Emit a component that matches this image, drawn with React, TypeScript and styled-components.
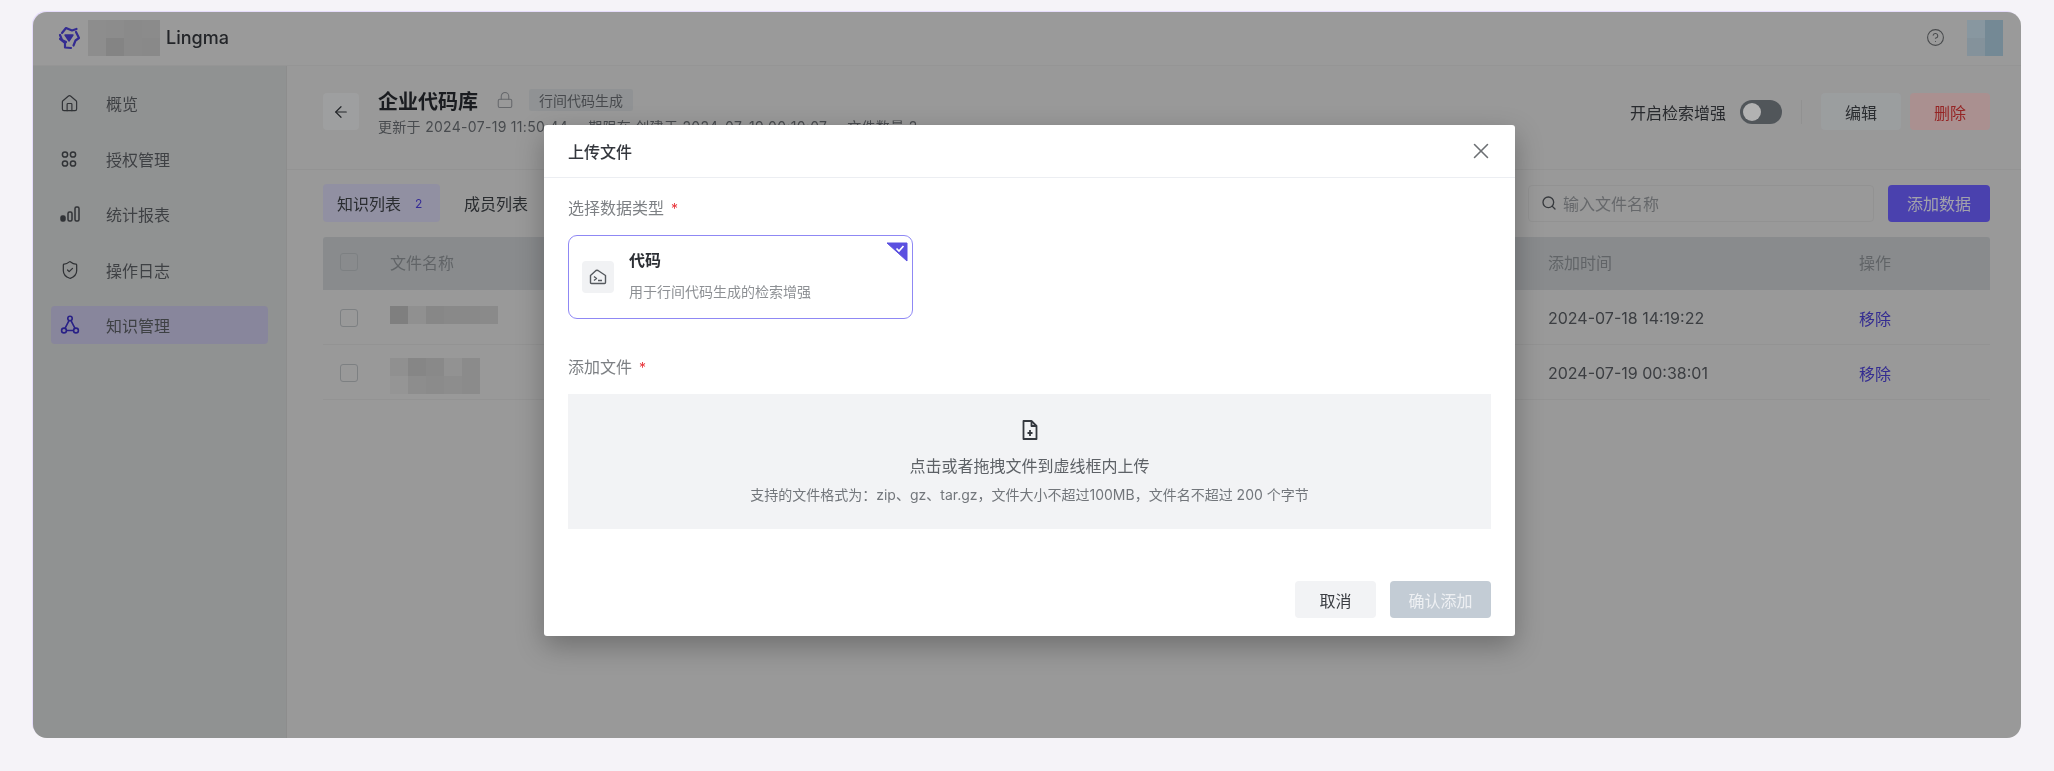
import React from 'react';
import styled, { createGlobalStyle } from 'styled-components';
import { ArrowLeft, CircleHelp, House, Lock, Search, ShieldCheck, X } from 'lucide-react';

const GlobalStyle = createGlobalStyle`
  html, body { margin: 0; padding: 0; background: #f5f3f8; }
  * { box-sizing: border-box; }
  body { font-family: Inter, "Noto Sans CJK SC", sans-serif; color: #2b2f36; }
`;

const Page = styled.div`
  width: 2054px;
  height: 771px;
  padding: 12px 33px 33px;
  overflow: hidden;
`;

const AppFrame = styled.div`
  position: relative;
  height: 726px;
  display: flex;
  flex-direction: column;
  border-radius: 14px;
  overflow: hidden;
  background: #dbdbdb;
  box-shadow: -1px -1px 0 #e6dcfb;
  filter: blur(0.55px);
`;

const TopBar = styled.header`
  height: 54px;
  flex: none;
  display: flex;
  align-items: center;
  padding: 0 18px 2px 24px;
  background: #dddddd;
  border-bottom: 1px solid #d6d6d6;
`;

const BrandName = styled.span`
  font-size: 18px;
  font-weight: 500;
  margin-left: 6px;
  color: #33363b;
`;

const MosaicGrid = styled.div<{ $cols: number; $cell: number }>`
  display: grid;
  grid-template-columns: repeat(${(p) => p.$cols}, ${(p) => p.$cell}px);
  grid-auto-rows: ${(p) => p.$cell}px;
`;

const MosaicCell = styled.div<{ $c: string }>`
  background: ${(p) => p.$c};
`;

const BrandMosaic = styled(MosaicGrid)`
  margin-left: 7px;
`;

const FileMosaic = styled(MosaicGrid)<{ $shift: number }>`
  margin-top: ${(p) => (p.$shift > 0 ? p.$shift : 0)}px;
  margin-bottom: ${(p) => (p.$shift < 0 ? -p.$shift : 0)}px;
`;

const TopRight = styled.div`
  margin-left: auto;
  display: flex;
  align-items: center;
  gap: 22px;
  color: #6a6d70;
`;

const Body = styled.div`
  flex: 1;
  display: flex;
  min-height: 0;
`;

const Sidebar = styled.nav`
  width: 254px;
  flex: none;
  padding: 18px 18px 0;
  display: flex;
  flex-direction: column;
  gap: 17.6px;
  background: #cfd1d1;
  border-right: 1px solid #cbcbcb;
`;

const NavItem = styled.div<{ $active?: boolean }>`
  height: 38px;
  display: flex;
  align-items: center;
  gap: 28px;
  padding-left: 9px;
  border-radius: 4px;
  font-size: 16px;
  color: #5a5d62;
  background: ${(p) => (p.$active ? '#c3c0e0' : 'transparent')};
  svg { flex: none; color: ${(p) => (p.$active ? '#3a2fc0' : '#46494e')}; }
`;

const NavIcon = styled.span`
  width: 18px;
  flex: none;
  display: flex;
`;

const Main = styled.main`
  flex: 1;
  min-width: 0;
  display: flex;
  flex-direction: column;
`;

const DetailHead = styled.section`
  height: 104px;
  flex: none;
  display: flex;
  align-items: flex-start;
  padding: 27px 31px 0 36px;
  border-bottom: 1px solid #d3d3d3;
`;

const BackButton = styled.div`
  width: 36px;
  height: 37px;
  display: flex;
  align-items: center;
  justify-content: center;
  border-radius: 4px;
  background: #e3e4e5;
  color: #33373c;
`;

const TitleBlock = styled.div`
  margin-left: 19px;
  margin-top: -7px;
`;

const TitleRow = styled.div`
  display: flex;
  align-items: center;
  height: 28px;
`;

const Title = styled.h1`
  margin: 0;
  font-size: 20px;
  font-weight: 600;
  color: #26292e;
`;

const LockWrap = styled.span`
  display: flex;
  margin: 0 15px 0 18px;
  color: #92959a;
`;

const ModeTag = styled.span`
  height: 22px;
  padding: 0 10px;
  display: flex;
  align-items: center;
  font-size: 14px;
  border-radius: 2px;
  color: #676b70;
  background: #cfd2d4;
`;

const MetaLine = styled.div`
  display: flex;
  gap: 20px;
  margin-top: 3px;
  font-size: 14px;
  line-height: 20px;
  letter-spacing: 0.3px;
  color: #686c71;
  white-space: nowrap;
`;

const HeadActions = styled.div`
  margin-left: auto;
  display: flex;
  align-items: center;
  height: 37px;
`;

const ToggleLabel = styled.span`
  font-size: 16px;
  color: #3a3d42;
  margin-right: 14px;
`;

const Toggle = styled.span`
  width: 42px;
  height: 24px;
  padding: 3px;
  border-radius: 12px;
  background: #747b82;
  display: flex;
  &::before {
    content: '';
    width: 18px;
    height: 18px;
    border-radius: 50%;
    background: #ffffff;
  }
`;

const VRule = styled.span`
  width: 1px;
  height: 24px;
  margin: 0 19px;
  background: #d0d0d0;
`;

const GhostButton = styled.div<{ $danger?: boolean }>`
  width: 80px;
  height: 37px;
  margin-left: ${(p) => (p.$danger ? '9px' : '0')};
  display: flex;
  align-items: center;
  justify-content: center;
  font-size: 16px;
  border-radius: 4px;
  color: ${(p) => (p.$danger ? '#d63434' : '#3d4146')};
  background: ${(p) => (p.$danger ? '#f4cfcf' : '#dfe2e4')};
`;

const ListArea = styled.section`
  padding: 14px 31px 0 36px;
`;

const TabsRow = styled.div`
  display: flex;
  align-items: center;
  height: 38px;
`;

const Tab = styled.div<{ $active?: boolean }>`
  height: 38px;
  width: ${(p) => (p.$active ? '117px' : 'auto')};
  margin-left: ${(p) => (p.$active ? '0' : '10px')};
  padding-left: 14px;
  display: flex;
  align-items: center;
  gap: 14px;
  font-size: 16px;
  border-radius: 4px;
  color: #3d4146;
  background: ${(p) => (p.$active ? '#d0cee8' : 'transparent')};
`;

const TabCount = styled.span`
  font-size: 12px;
  color: #4d40d8;
`;

const SearchBox = styled.div`
  margin-left: auto;
  width: 346px;
  height: 37px;
  display: flex;
  align-items: center;
  gap: 6px;
  padding-left: 12px;
  font-size: 16px;
  border: 1px solid #d2d2d2;
  border-radius: 4px;
  color: #93969a;
  svg { color: #4f5358; }
`;

const AddButton = styled.div`
  width: 102px;
  height: 37px;
  margin-left: 14px;
  display: flex;
  align-items: center;
  justify-content: center;
  font-size: 16px;
  border-radius: 4px;
  color: #e8e8f5;
  background: #6b5dfa;
`;

const TableRow = styled.div<{ $head?: boolean }>`
  display: grid;
  grid-template-columns: 67px 1158px 311px 131px;
  align-items: center;
  height: ${(p) => (p.$head ? '53px' : '55px')};
  margin-top: ${(p) => (p.$head ? '15px' : '0')};
  padding-bottom: ${(p) => (p.$head ? '3px' : '0')};
  padding-top: ${(p) => (p.$head ? '0' : '1px')};
  font-size: 16px;
  color: ${(p) => (p.$head ? '#8c9094' : '#565a5f')};
  background: ${(p) => (p.$head ? '#c4c8cb' : 'transparent')};
  border-bottom: ${(p) => (p.$head ? 'none' : '1px solid #d3d3d3')};
  border-radius: ${(p) => (p.$head ? '3px 3px 0 0' : '0')};
`;

const CheckBox = styled.span`
  width: 18px;
  height: 18px;
  margin-left: 17px;
  border: 1px solid #b3b8bb;
  border-radius: 3px;
`;

const RemoveLink = styled.span`
  color: #4a3fd0;
`;

const Scrim = styled.div`
  position: absolute;
  inset: 0;
  background: rgba(0, 0, 0, 0.3);
`;

const Modal = styled.div`
  position: absolute;
  left: 511px;
  top: 113px;
  width: 971px;
  height: 511px;
  display: flex;
  flex-direction: column;
  border-radius: 3px;
  background: #ffffff;
  box-shadow: 0 10px 28px rgba(0, 0, 0, 0.28);
`;

const ModalHead = styled.div`
  height: 53px;
  flex: none;
  display: flex;
  align-items: center;
  justify-content: space-between;
  padding: 0 21px 0 24px;
  border-bottom: 1px solid #eceef2;
  color: #6c6f73;
`;

const ModalTitle = styled.h2`
  margin: 0;
  font-size: 16px;
  font-weight: 500;
  color: #34373d;
`;

const ModalBody = styled.div`
  padding: 19px 24px 0;
  display: flex;
  flex-direction: column;
`;

const FieldLabel = styled.div<{ $second?: boolean }>`
  font-size: 16px;
  line-height: 22px;
  margin-top: ${(p) => (p.$second ? '37px' : '0')};
  margin-bottom: 15px;
  color: #7d8084;
  &::after { content: ' *'; color: #e8353b; font-size: 14px; margin-left: 3px; }
`;

const TypeCard = styled.div`
  position: relative;
  width: 345px;
  height: 84px;
  display: flex;
  align-items: center;
  gap: 15px;
  padding-left: 13px;
  border: 1.5px solid #8f88f4;
  border-radius: 9px;
`;

const CornerMark = styled.svg`
  position: absolute;
  top: 6px;
  right: 4px;
`;

const TypeIcon = styled.div`
  width: 32px;
  height: 32px;
  flex: none;
  display: flex;
  align-items: center;
  justify-content: center;
  border-radius: 4px;
  background: #f1f2f4;
  color: #55595e;
`;

const TypeTitle = styled.div`
  font-size: 16px;
  font-weight: 600;
  line-height: 22px;
  margin-top: -4px;
  color: #2c2f34;
`;

const TypeDesc = styled.div`
  font-size: 14px;
  line-height: 20px;
  margin-top: 11px;
  color: #8d9094;
`;

const DropZone = styled.div`
  height: 135px;
  padding-top: 26px;
  display: flex;
  flex-direction: column;
  align-items: center;
  background: #f2f3f5;
  color: #34383e;
`;

const DropTitle = styled.div`
  font-size: 16px;
  line-height: 22px;
  margin-top: 15px;
  color: #5d6166;
`;

const DropHint = styled.div`
  font-size: 14px;
  line-height: 20px;
  margin-top: 8px;
  color: #72767b;
`;

const ModalFoot = styled.div`
  display: flex;
  justify-content: flex-end;
  gap: 14px;
  margin-top: 52px;
`;

const FootButton = styled.div<{ $primary?: boolean }>`
  width: ${(p) => (p.$primary ? '101px' : '81px')};
  height: 37px;
  display: flex;
  align-items: center;
  justify-content: center;
  font-size: 16px;
  border-radius: 4px;
  color: ${(p) => (p.$primary ? '#eef0f3' : '#3a3d42')};
  background: ${(p) => (p.$primary ? '#c3ccd5' : '#f2f3f5')};
`;

const Logo = () => (
  <svg width="24" height="26" viewBox="0 0 24 26" fill="none" stroke="#4a3fd0" strokeWidth="2.2" strokeLinejoin="round" strokeLinecap="round">
    <path d="M8 10 H16 L12 16 Z" fill="#4a3fd0" strokeWidth="1.4" />
    <path d="M5 8 L9 3 L15 5.5 L19.5 4" />
    <path d="M19 7 L22 13 L18.5 15.5 L16.5 20.5" />
    <path d="M14 23 L8 22.5 L8 18 L3 14" />
    <path d="M3 10 L5 15 L9 17" />
  </svg>
);

const AppsIcon = () => (
  <svg width="18" height="20" viewBox="0 0 18 20" fill="none" stroke="currentColor" strokeWidth="1.5">
    <circle cx="5" cy="5.5" r="2.6" />
    <circle cx="13" cy="5.5" r="2.6" />
    <circle cx="5" cy="14.5" r="2.6" />
    <circle cx="13" cy="14.5" r="2.6" />
  </svg>
);

const BarsIcon = () => (
  <svg width="20" height="18" viewBox="0 0 20 18" fill="none" stroke="currentColor" strokeWidth="1.5">
    <rect x="1" y="11" width="4" height="5" rx="1.5" fill="currentColor" />
    <rect x="8" y="7" width="4" height="9" rx="1.5" />
    <rect x="15" y="2" width="4" height="14" rx="1.5" />
  </svg>
);

const NodesIcon = () => (
  <svg width="20" height="20" viewBox="0 0 20 20" fill="none" stroke="currentColor" strokeWidth="1.6">
    <circle cx="10" cy="3.5" r="2.2" />
    <circle cx="4" cy="15.5" r="2.4" />
    <circle cx="16" cy="15.5" r="2.4" />
    <path d="M9 5.6 L5 13.4 M11 5.6 L15 13.4 M6.4 15.5 H13.6" />
  </svg>
);

const CodeBoxIcon = () => (
  <svg width="18" height="16" viewBox="0 0 18 16" fill="none" stroke="currentColor" strokeWidth="1.4" strokeLinejoin="round">
    <path d="M1.5 6.5 L7 1.5 Q8 1 9 1.5 L16.5 6.5 V13.5 Q16.5 14.5 15.5 14.5 H2.5 Q1.5 14.5 1.5 13.5 Z" />
    <path d="M5 7.5 L7.5 9.5 L5 11.5 M9 11.5 H13" />
  </svg>
);

const FilePlusIcon = () => (
  <svg width="16" height="20" viewBox="0 0 16 20" fill="none" stroke="currentColor" strokeWidth="1.8" strokeLinejoin="round">
    <path d="M1.5 1 H9.5 L14.5 6 V19 H1.5 Z" />
    <path d="M9.5 1 V6 H14.5" />
    <path d="M8 10 V16 M5.5 13 H10.5" />
  </svg>
);

const Cells = ({ colors }: { colors: string[] }) => (
  <>
    {colors.map((c, i) => (
      <MosaicCell key={i} $c={c} />
    ))}
  </>
);

const navItems = [
  { label: '概览', icon: <House size={19} strokeWidth={1.5} /> },
  { label: '授权管理', icon: <AppsIcon /> },
  { label: '统计报表', icon: <BarsIcon /> },
  { label: '操作日志', icon: <ShieldCheck size={20} strokeWidth={1.5} /> },
  { label: '知识管理', icon: <NodesIcon />, active: true },
];

export default function App() {
  return (
    <>
      <GlobalStyle />
      <Page>
        <AppFrame>
          <TopBar>
            <Logo />
            <BrandMosaic $cols={4} $cell={18}>
              <Cells colors={['#cbcbcb', '#c9c9c9', '#c6c6c6', '#c8c8c8', '#cbcbcb', '#bdbdbd', '#c6c6c6', '#c4c4c4']} />
            </BrandMosaic>
            <BrandName>Lingma</BrandName>
            <TopRight>
              <CircleHelp size={19} strokeWidth={1.4} />
              <MosaicGrid $cols={2} $cell={18}>
                <Cells colors={['#c3d9e6', '#a6c4d6', '#bdd2df', '#a6c4d6']} />
              </MosaicGrid>
            </TopRight>
          </TopBar>
          <Body>
            <Sidebar>
              {navItems.map((item) => (
                <NavItem key={item.label} $active={item.active}>
                  <NavIcon>{item.icon}</NavIcon>
                  <span>{item.label}</span>
                </NavItem>
              ))}
            </Sidebar>
            <Main>
              <DetailHead>
                <BackButton>
                  <ArrowLeft size={18} strokeWidth={1.6} />
                </BackButton>
                <TitleBlock>
                  <TitleRow>
                    <Title>企业代码库</Title>
                    <LockWrap>
                      <Lock size={18} strokeWidth={1.4} />
                    </LockWrap>
                    <ModeTag>行间代码生成</ModeTag>
                  </TitleRow>
                  <MetaLine>
                    <span>更新于 2024-07-19 11:50:44</span>
                    <span>期限在 创建于 2024-07-19 00:10:07</span>
                    <span>文件数量 2</span>
                  </MetaLine>
                </TitleBlock>
                <HeadActions>
                  <ToggleLabel>开启检索增强</ToggleLabel>
                  <Toggle />
                  <VRule />
                  <GhostButton>编辑</GhostButton>
                  <GhostButton $danger>删除</GhostButton>
                </HeadActions>
              </DetailHead>
              <ListArea>
                <TabsRow>
                  <Tab $active>
                    知识列表 <TabCount>2</TabCount>
                  </Tab>
                  <Tab>成员列表</Tab>
                  <SearchBox>
                    <Search size={16} strokeWidth={2} />
                    输入文件名称
                  </SearchBox>
                  <AddButton>添加数据</AddButton>
                </TabsRow>
                <TableRow $head>
                  <CheckBox />
                  <span>文件名称</span>
                  <span>添加时间</span>
                  <span>操作</span>
                </TableRow>
                <TableRow>
                  <CheckBox />
                  <FileMosaic $cols={6} $cell={18} $shift={-6}>
                    <Cells colors={['#b6b6b6', '#cfcfcf', '#c2c2c2', '#c4c4c4', '#c4c4c4', '#c6c6c6']} />
                  </FileMosaic>
                  <span>2024-07-18 14:19:22</span>
                  <RemoveLink>移除</RemoveLink>
                </TableRow>
                <TableRow>
                  <CheckBox />
                  <FileMosaic $cols={5} $cell={18} $shift={6}>
                    <Cells colors={['#cfcfcf', '#c0c0c0', '#c4c4c4', '#d2d2d2', '#c8c8c8', '#d6d6d6', '#cbcbcb', '#c8c8c8', '#cbcbcb', '#c8c8c8']} />
                  </FileMosaic>
                  <span>2024-07-19 00:38:01</span>
                  <RemoveLink>移除</RemoveLink>
                </TableRow>
              </ListArea>
            </Main>
          </Body>
          <Scrim />
          <Modal>
            <ModalHead>
              <ModalTitle>上传文件</ModalTitle>
              <X size={26} strokeWidth={1.4} />
            </ModalHead>
            <ModalBody>
              <FieldLabel>选择数据类型</FieldLabel>
              <TypeCard>
                <TypeIcon>
                  <CodeBoxIcon />
                </TypeIcon>
                <div>
                  <TypeTitle>代码</TypeTitle>
                  <TypeDesc>用于行间代码生成的检索增强</TypeDesc>
                </div>
                <CornerMark width="22" height="20" viewBox="0 0 22 20">
                  <path d="M1 1 H21 V19 Z" fill="#5b50e0" stroke="#5b50e0" strokeLinejoin="round" />
                  <path d="M10.5 6.5 L13 9 L17.5 4" fill="none" stroke="#ffffff" strokeWidth="1.7" />
                </CornerMark>
              </TypeCard>
              <FieldLabel $second>添加文件</FieldLabel>
              <DropZone>
                <FilePlusIcon />
                <DropTitle>点击或者拖拽文件到虚线框内上传</DropTitle>
                <DropHint>支持的文件格式为：zip、gz、tar.gz，文件大小不超过100MB，文件名不超过 200 个字节</DropHint>
              </DropZone>
              <ModalFoot>
                <FootButton>取消</FootButton>
                <FootButton $primary>确认添加</FootButton>
              </ModalFoot>
            </ModalBody>
          </Modal>
        </AppFrame>
      </Page>
    </>
  );
}
